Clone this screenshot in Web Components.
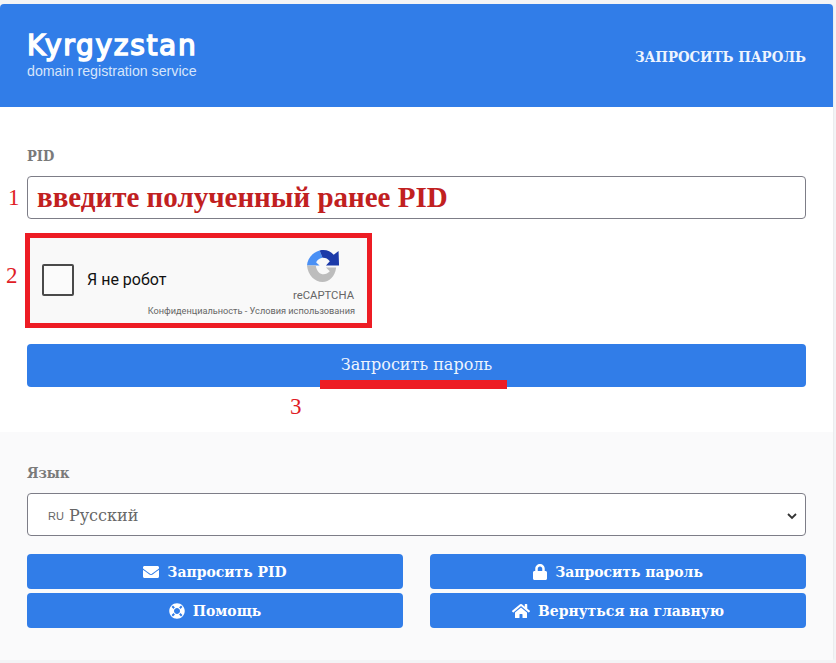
<!DOCTYPE html>
<html lang="ru">
<head>
<meta charset="utf-8">
<title>Запросить пароль</title>
<style>
  html, body { margin: 0; background: #f3f4f6; }
  body { font-family: "DejaVu Serif", "Liberation Serif", serif; }
</style>
</head>
<body>
<app-card>
  <site-header slot="header" title="ЗАПРОСИТЬ ПАРОЛЬ"></site-header>

  <form-field label="PID">
    <text-box></text-box>
    <red-note class="pid" style="left:37px;top:174px">введите полученный ранее PID</red-note>
  </form-field>
  <captcha-box></captcha-box>
  <main-button>Запросить пароль</main-button>

  <red-num style="left:8px;top:181px">1</red-num>
  <red-num style="left:6px;top:259px">2</red-num>
  <red-num style="left:290px;top:390px">3</red-num>

  <form-field slot="footer" label="Язык">
    <lang-select></lang-select>
  </form-field>
  <action-grid slot="footer">
    <action-button icon="envelope">Запросить PID</action-button>
    <action-button icon="lock">Запросить пароль</action-button>
    <action-button icon="lifering">Помощь</action-button>
    <action-button icon="home">Вернуться на главную</action-button>
  </action-grid>
</app-card>

<script>
// Serif stacks for the slab-looking text, Roboto Slab is not installed
const SLAB = '"DejaVu Serif Condensed", "DejaVu Serif", serif';
const SLAB_WIDE = '"DejaVu Serif", serif';

// Solid icons, viewBox + path
const ICONS = {
  envelope: ['0 0 512 512', 'M502.3 190.8c3.9-3.1 9.7-.2 9.7 4.7V400c0 26.5-21.5 48-48 48H48c-26.5 0-48-21.5-48-48V195.6c0-5 5.7-7.8 9.7-4.7 22.4 17.4 52.1 39.5 154.1 113.6 21.1 15.4 56.7 47.8 92.2 47.6 35.7.3 72-32.8 92.3-47.6 102-74.1 131.6-96.3 154-113.7zM256 320c23.2.4 56.6-29.2 73.4-41.4 132.7-96.3 142.8-104.7 173.4-128.7 5.8-4.5 9.2-11.5 9.2-18.9v-19c0-26.5-21.5-48-48-48H48C21.5 64 0 85.5 0 112v19c0 7.4 3.4 14.3 9.2 18.9 30.6 23.9 40.7 32.4 173.4 128.7 16.8 12.2 50.2 41.8 73.4 41.4z'],
  lock: ['0 0 448 512', 'M400 224h-24v-72C376 68.2 307.8 0 224 0S72 68.2 72 152v72H48c-26.5 0-48 21.5-48 48v192c0 26.5 21.5 48 48 48h352c26.5 0 48-21.5 48-48V272c0-26.5-21.5-48-48-48zm-104 0H152v-72c0-39.7 32.3-72 72-72s72 32.3 72 72v72z'],
  lifering: ['0 0 512 512', 'M256 8C119 8 8 119 8 256s111 248 248 248 248-111 248-248S393 8 256 8zm173.696 119.559l-63.399 63.399c-10.987-18.559-26.67-34.252-45.255-45.255l63.399-63.399a218.396 218.396 0 0 1 45.255 45.255zM256 352c-53.019 0-96-42.981-96-96s42.981-96 96-96 96 42.981 96 96-42.981 96-96 96zM127.559 82.304l63.399 63.399c-18.559 10.987-34.252 26.67-45.255 45.255l-63.399-63.399a218.372 218.372 0 0 1 45.255-45.255zM82.304 384.441l63.399-63.399c10.987 18.559 26.67 34.252 45.255 45.255l-63.399 63.399a218.396 218.396 0 0 1-45.255-45.255zm302.137 45.255l-63.399-63.399c18.559-10.987 34.252-26.67 45.255-45.255l63.399 63.399a218.429 218.429 0 0 1-45.255 45.255z'],
  home: ['0 0 576 512', 'M280.37 148.26L96 300.11V464a16 16 0 0 0 16 16l112.06-.29a16 16 0 0 0 15.92-16V368a16 16 0 0 1 16-16h64a16 16 0 0 1 16 16v95.64a16 16 0 0 0 16 16.05L464 480a16 16 0 0 0 16-16V300L295.67 148.26a12.19 12.19 0 0 0-15.3 0zM571.6 251.47L488 182.56V44.05a12 12 0 0 0-12-12h-56a12 12 0 0 0-12 12v72.61L318.47 43a48 48 0 0 0-61 0L4.34 251.47a12 12 0 0 0-1.6 16.9l25.5 31A12 12 0 0 0 45.15 301l235.22-193.74a12.19 12.19 0 0 1 15.3 0L530.9 301a12 12 0 0 0 16.9-1.6l25.5-31a12 12 0 0 0-1.7-16.93z']
};

// Small helper, every element below is just a shadow root with fixed markup
function shadow(el, html) {
  el.attachShadow({ mode: 'open' }).innerHTML = html;
}

class AppCard extends HTMLElement {
  constructor() {
    super();
    shadow(this, `
    <style>
      :host { display: block; width: 833px; margin-top: 4px; position: relative;
        border-radius: 4px; box-shadow: 0 1px 2px rgba(0,0,0,.12); }
      .body { background: #fff; padding: 40px 27px 45px; height: 240px; }
      .foot { background: #fafafb; padding: 32px 27px 32px; height: 164px; }
    </style>
    <slot name="header"></slot>
    <div class="body"><slot></slot></div>
    <div class="foot"><slot name="footer"></slot></div>`);
  }
}

class SiteHeader extends HTMLElement {
  constructor() {
    super();
    shadow(this, `
    <style>
      :host { display: flex; justify-content: space-between; align-items: center;
        height: 103px; background: #317de8; color: #fff; padding: 0 27px;
        border-radius: 4px 4px 0 0; box-sizing: border-box; }
      .logo { display: flex; flex-direction: column; }
      .name { font: 28px/30px "DejaVu Sans", sans-serif; letter-spacing: 1.7px; margin-top: -3px;
        -webkit-text-stroke: 1.5px #fff; }
      .sub { font: 14.2px/14px "Liberation Sans", Arial, sans-serif; color: #d6e5fb; margin-top: 3px; }
      .title { font: bold 14.8px/20px ${SLAB}; color: #eef4fe; margin-top: 2px; }
    </style>
    <div class="logo">
      <span class="name">Kyrgyzstan</span>
      <span class="sub">domain registration service</span>
    </div>
    <span class="title">${this.getAttribute('title')}</span>`);
  }
}

class FormField extends HTMLElement {
  constructor() {
    super();
    shadow(this, `
    <style>
      :host { display: block; }
      label { display: block; font: bold 14.5px/18px ${SLAB}; color: #7a7a7a; margin-bottom: 11px; }
    </style>
    <label>${this.getAttribute('label')}</label>
    <slot></slot>`);
  }
}

class TextBox extends HTMLElement {
  constructor() {
    super();
    shadow(this, `
    <style>
      :host { display: block; height: 43px; box-sizing: border-box; background: #fff;
        border: 1px solid #7d7d87; border-radius: 4px; }
    </style>`);
  }
}

// Annotations painted over the screenshot, these do lie over other content
class RedNote extends HTMLElement {
  constructor() {
    super();
    shadow(this, `
    <style>
      :host { position: absolute; font: bold 29px/38px "Liberation Serif", serif;
        color: #c1201f; white-space: nowrap; }
    </style>
    <slot></slot>`);
  }
}

class RedNum extends HTMLElement {
  constructor() {
    super();
    shadow(this, `
    <style>
      :host { position: absolute; font: 23px/26px "Liberation Serif", serif; color: #e01c26; }
    </style>
    <slot></slot>`);
  }
}

class CaptchaBox extends HTMLElement {
  constructor() {
    super();
    shadow(this, `
    <style>
      :host { display: block; position: relative; width: 347px; height: 95px; box-sizing: border-box;
        margin: 14px 0 16px -2px; border: 5px solid #ed1c24; background: #f9f9f9;
        font-family: Roboto, "Liberation Sans", sans-serif; }
      .wrap { display: flex; align-items: center; height: 100%; padding-left: 12px; padding-bottom: 4px; box-sizing: border-box; }
      .box { width: 28px; height: 28px; border: 2px solid #4a4a4a; border-radius: 2px; background: #fbfbfb; margin-top: 3px; }
      .txt { font-size: 16px; margin-left: 13px; color: #111; margin-top: 1px; }
      .brand { position: absolute; right: 13px; top: 11px; display: flex; flex-direction: column; align-items: center; }
      .brand span { font-size: 11.3px; color: #666; margin-top: 5px; }
      .links { position: absolute; right: 12px; bottom: 7px; font-size: 9.2px; line-height: 11px; color: #666; white-space: nowrap; }
    </style>
    <div class="wrap">
      <div class="box"></div>
      <span class="txt">Я не робот</span>
    </div>
    <div class="brand">
      <svg width="35" height="35" viewBox="0 0 36 36">
        <path fill="#4a90f5" d="M1 17 C1.5 10 6 4 14 1.5 L17 9 C13 9.5 11 12 10.5 14 L14 17 Z"/>
        <path fill="#1c3aa9" d="M14 1.5 C20 0 25 2 28.5 6 L33.5 2 L34 17 L20.5 17 L24.5 12.5 C22.5 10 20 8.8 17 9 Z"/>
        <path fill="#bdbdbd" d="M1 17 L10 17 C11 23.5 14.5 26 18 26 C20.5 26 22.5 25 24.5 23 L20.5 19 L31 19 C30 28 24 34 17 34 C9 34 2 27 1 17 Z"/>
      </svg>
      <span>reCAPTCHA</span>
    </div>
    <div class="links">Конфиденциальность - Условия использования</div>`);
  }
}

class MainButton extends HTMLElement {
  constructor() {
    super();
    shadow(this, `
    <style>
      :host { display: block; }
      button { display: block; width: 100%; height: 43px; border: 0; border-radius: 4px;
        background: #317de8; color: #eef4fe; font: 16px/20px ${SLAB_WIDE}; padding: 0 0 2px; }
      .mark { position: absolute; left: 320px; top: 376px; width: 187px; height: 9px; background: #ed1c24; }
    </style>
    <button><slot></slot></button>
    <div class="mark"></div>`);
  }
}

class LangSelect extends HTMLElement {
  constructor() {
    super();
    shadow(this, `
    <style>
      :host { display: flex; align-items: center; height: 43px; box-sizing: border-box;
        background: #fff; border: 1px solid #7d7d87; border-radius: 4px; padding: 2px 8px 0 20px;
        font: 16px/20px ${SLAB_WIDE}; color: #666; }
      small { font: 11px "Liberation Sans", sans-serif; margin-right: 5px; color: #666; }
      span { flex: 1; }
    </style>
    <small>RU</small><span>Русский</span>
    <svg width="10" height="8" viewBox="0 0 10 8"><path d="M1 2l4 4 4-4" fill="none" stroke="#333" stroke-width="1.8"/></svg>`);
  }
}

class ActionGrid extends HTMLElement {
  constructor() {
    super();
    shadow(this, `
    <style>
      :host { display: grid; grid-template-columns: 376px 376px; column-gap: 27px; row-gap: 4px; margin-top: 18px; }
    </style>
    <slot></slot>`);
  }
}

class ActionButton extends HTMLElement {
  constructor() {
    super();
    const [box, d] = ICONS[this.getAttribute('icon')];
    shadow(this, `
    <style>
      :host { display: flex; align-items: center; justify-content: center; gap: 8px; height: 35px;
        background: #317de8; color: #fff; border-radius: 4px; font: bold 15.5px/20px ${SLAB}; }
      svg { height: 16px; fill: #fff; fill-rule: evenodd; }
    </style>
    <svg viewBox="${box}"><path d="${d}"/></svg>
    <span><slot></slot></span>`);
  }
}

customElements.define('app-card', AppCard);
customElements.define('site-header', SiteHeader);
customElements.define('form-field', FormField);
customElements.define('text-box', TextBox);
customElements.define('red-note', RedNote);
customElements.define('red-num', RedNum);
customElements.define('captcha-box', CaptchaBox);
customElements.define('main-button', MainButton);
customElements.define('lang-select', LangSelect);
customElements.define('action-grid', ActionGrid);
customElements.define('action-button', ActionButton);
</script>
</body>
</html>
